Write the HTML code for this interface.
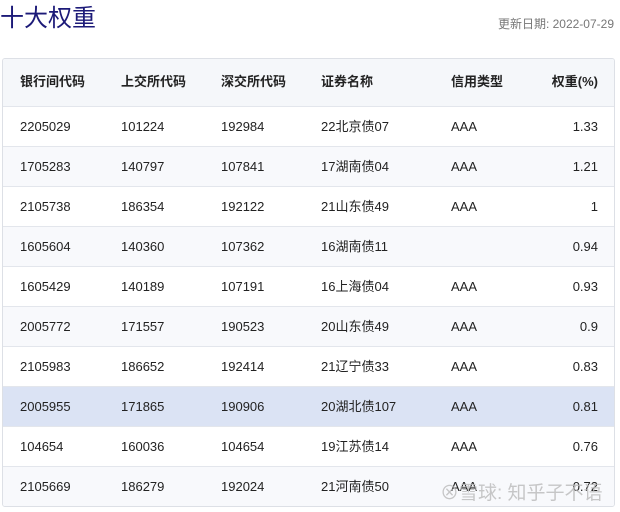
<!DOCTYPE html>
<html><head><meta charset="utf-8"><style>
body{margin:0;width:620px;height:512px;background:#fff;font-family:"Liberation Sans","Noto Sans CJK SC",sans-serif;position:relative;overflow:hidden}
.t{position:absolute;left:0;top:4px;font-size:24px;line-height:30px;color:#1c1a78}
.d{position:absolute;right:6px;top:17px;font-size:12px;line-height:14px;color:#777}
.tb{position:absolute;left:2px;top:58px;width:611px;border:1px solid #dde0e6;border-radius:3px;overflow:hidden}
.r{height:40px;border-top:1px solid #e3e6ec;position:relative;font-size:13px;color:#222;box-sizing:border-box}
.r span{position:absolute;top:12px;line-height:16px;height:16px}
.h{height:47px;background:#f5f7fa;border-top:none;font-weight:bold}
.h span{top:15px}
.e{background:#f8f9fc}
.s{background:#dbe3f4}
.c1{left:17px}.c2{left:118px}.c3{left:218px}.c4{left:318px}.c5{left:448px}.c6{right:16px}
.w{position:absolute;left:440px;top:482px;font-size:19px;line-height:24px;color:rgba(185,185,185,.8)}
</style></head><body>
<div class="t">十大权重</div>
<div class="d">更新日期: 2022-07-29</div>
<div class="tb">
<div class="r h"><span class="c1">银行间代码</span><span class="c2">上交所代码</span><span class="c3">深交所代码</span><span class="c4">证券名称</span><span class="c5">信用类型</span><span class="c6">权重(%)</span></div>
<div class="r"><span class="c1">2205029</span><span class="c2">101224</span><span class="c3">192984</span><span class="c4">22北京债07</span><span class="c5">AAA</span><span class="c6">1.33</span></div>
<div class="r e"><span class="c1">1705283</span><span class="c2">140797</span><span class="c3">107841</span><span class="c4">17湖南债04</span><span class="c5">AAA</span><span class="c6">1.21</span></div>
<div class="r"><span class="c1">2105738</span><span class="c2">186354</span><span class="c3">192122</span><span class="c4">21山东债49</span><span class="c5">AAA</span><span class="c6">1</span></div>
<div class="r e"><span class="c1">1605604</span><span class="c2">140360</span><span class="c3">107362</span><span class="c4">16湖南债11</span><span class="c5"></span><span class="c6">0.94</span></div>
<div class="r"><span class="c1">1605429</span><span class="c2">140189</span><span class="c3">107191</span><span class="c4">16上海债04</span><span class="c5">AAA</span><span class="c6">0.93</span></div>
<div class="r e"><span class="c1">2005772</span><span class="c2">171557</span><span class="c3">190523</span><span class="c4">20山东债49</span><span class="c5">AAA</span><span class="c6">0.9</span></div>
<div class="r"><span class="c1">2105983</span><span class="c2">186652</span><span class="c3">192414</span><span class="c4">21辽宁债33</span><span class="c5">AAA</span><span class="c6">0.83</span></div>
<div class="r s"><span class="c1">2005955</span><span class="c2">171865</span><span class="c3">190906</span><span class="c4">20湖北债107</span><span class="c5">AAA</span><span class="c6">0.81</span></div>
<div class="r"><span class="c1">104654</span><span class="c2">160036</span><span class="c3">104654</span><span class="c4">19江苏债14</span><span class="c5">AAA</span><span class="c6">0.76</span></div>
<div class="r e"><span class="c1">2105669</span><span class="c2">186279</span><span class="c3">192024</span><span class="c4">21河南债50</span><span class="c5">AAA</span><span class="c6">0.72</span></div>
</div>
<div class="w">⊗雪球: 知乎子不语</div>
</body></html>
